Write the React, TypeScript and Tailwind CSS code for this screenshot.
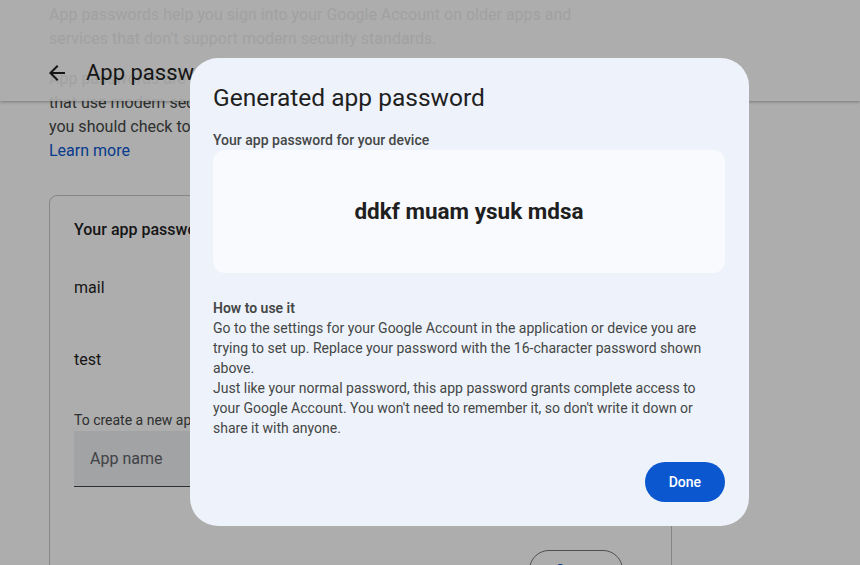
import React from "react";

const body = { fontFamily: "Roboto, 'Liberation Sans', Arial, sans-serif" };

function ArrowBack() {
  return (
    <svg width="24" height="24" viewBox="0 0 24 24" fill="#1f1f1f">
      <path d="M20 11H7.83l5.59-5.59L12 4l-8 8 8 8 1.41-1.41L7.83 13H20v-2z" />
    </svg>
  );
}

function BackgroundPage() {
  return (
    <div className="relative h-full w-full overflow-hidden bg-white">
      {/* scrolled content */}
      <div className="pl-[49px] pt-[3px] w-[672px] text-[16px] leading-[24px] text-[#1f1f1f]">
        <p className="text-[#444746]">
          App passwords help you sign into your Google Account on older apps and
          <br />
          services that don’t support modern security standards.
        </p>
        <p className="mt-[16px] text-[#444746]">
          App passwords are less secure than using up-to-date apps and services
          <br />
          that use modern security standards. Before you create an app password,
          <br />
          you should check to see if your app needs this in order to sign in.
        </p>
        <a className="block text-[#0b57d0]">Learn more</a>

        <div className="mt-[32px] rounded-lg border border-[#c4c7c5] px-6 pt-[22px] pb-10">
          <div className="font-medium leading-[24px]">Your app passwords</div>
          <div className="mt-[10px]">
            <div className="flex h-[72px] items-center">mail</div>
            <div className="flex h-[72px] items-center">test</div>
          </div>
          <div className="mt-[14px] text-[14px] leading-[20px] text-[#444746]">
            To create a new app specific password, type a name for it below...
          </div>
          <div className="mt-px flex h-[56px] items-center border-b border-[#444746] bg-[#eef0f3] px-4 text-[#5f6368]">
            App name
          </div>
          <div className="mt-[63px] flex justify-end pr-6">
            <div className="flex h-10 w-[94px] items-center justify-center rounded-full border border-[#747775] text-[14px] font-medium text-[#0b57d0]">
              Create
            </div>
          </div>
        </div>
      </div>

      {/* sticky header over content */}
      <div className="absolute left-0 right-0 top-0 flex h-[101px] items-start bg-white/90 pl-[45px] pt-[59px] shadow-[0_1px_3px_rgba(0,0,0,0.3)]">
        <div className="flex h-[28px] items-center gap-[17px]">
          <ArrowBack />
          <span className="text-[22px] leading-[28px] text-[#1f1f1f]">App passwords</span>
        </div>
      </div>
    </div>
  );
}

export default function App() {
  return (
    <div className="relative h-[565px] w-[860px] overflow-hidden" style={body}>
      <BackgroundPage />
      <div className="absolute inset-0 bg-black/[0.32]" />

      <div className="absolute left-[190px] top-[58px] w-[559px] rounded-[28px] bg-[#eef2fa] px-6 pt-6 pb-6 pl-[23px]">
        <h2 className="text-[24.5px] font-normal leading-[32px] text-[#1f1f1f]">Generated app password</h2>
        <div className="mt-4 text-[14px] font-medium leading-[20px] text-[#444746]">
          Your app password for your device
        </div>
        <div className="flex h-[123px] items-center justify-center rounded-xl bg-[#f8fafd]">
          <span className="text-[22.5px] font-bold text-[#1f1f1f]">ddkf muam ysuk mdsa</span>
        </div>
        <div className="mt-[25px] text-[14px] leading-[20px] text-[#444746]">
          <div className="font-semibold">How to use it</div>
          <p>
            Go to the settings for your Google Account in the application or device you are trying to set
            up. Replace your password with the 16-character password shown above.
          </p>
          <p>
            Just like your normal password, this app password grants complete access to your Google
            Account. You won't need to remember it, so don't write it down or share it with anyone.
          </p>
        </div>
        <div className="mt-6 flex justify-end">
          <button className="h-10 rounded-full bg-[#0b57d0] px-6 text-[14px] font-medium text-white">Done</button>
        </div>
      </div>
    </div>
  );
}
